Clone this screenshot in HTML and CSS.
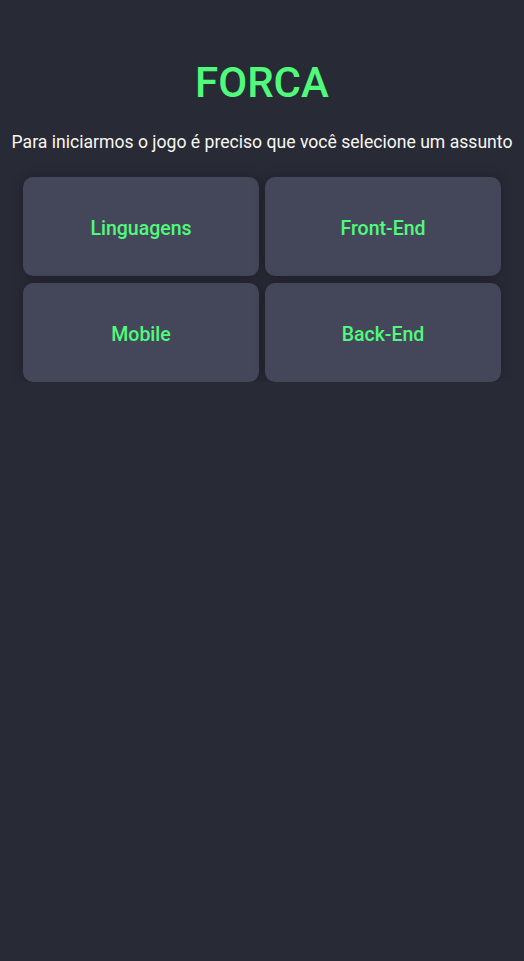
FILE: index.html
```html
<!DOCTYPE html>
<html lang="pt-BR">
<head>
<meta charset="utf-8">
<title>Forca</title>
<link rel="stylesheet" href="styles.css">
</head>
<body>
<main class="page">
  <h1 class="title">FORCA</h1>
  <p class="subtitle">Para iniciarmos o jogo é preciso que você selecione um assunto</p>
  <div class="topics">
    <button class="topic">Linguagens</button>
    <button class="topic">Front-End</button>
    <button class="topic">Mobile</button>
    <button class="topic">Back-End</button>
  </div>
</main>
</body>
</html>
```
FILE: styles.css
```css
html, body {
  margin: 0;
  padding: 0;
  background: #282a36;
  min-height: 100%;
}
body {
  font-family: Roboto, "Noto Sans", sans-serif;
  color: #f8f8f2;
}
.page {
  display: flex;
  flex-direction: column;
  align-items: center;
  padding-top: 57px;
}
.title {
  margin: 0;
  font-size: 42px;
  font-weight: 500;
  line-height: 51px;
  color: #50fa7b;
}
.subtitle {
  margin: 22px 0 0;
  font-size: 17.6px;
  line-height: 24px;
  color: #f8f8f2;
  white-space: nowrap;
}
.topics {
  margin-top: 23px;
  width: 478px;
  display: grid;
  grid-template-columns: 1fr 1fr;
  gap: 7px 6px;
}
.topic {
  height: 99px;
  border: none;
  border-radius: 10px;
  background: #44475a;
  color: #50fa7b;
  font-family: Roboto, "Noto Sans", sans-serif;
  font-size: 19.5px;
  font-weight: 500;
  box-shadow: 0 0 12px rgba(0, 0, 0, 0.25);
  cursor: pointer;
  padding: 3px 0 0;
}
```
